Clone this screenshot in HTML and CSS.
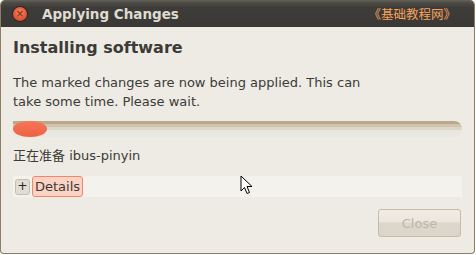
FILE: index.html
```html
<!DOCTYPE html>
<html lang="en">
<head>
    <meta charset="UTF-8">
    <title>Applying Changes</title>
    <link rel="stylesheet" href="styles.css">
</head>
<body>
    <div class="window">
        <div class="titlebar">
            <span class="close-btn"><span class="close-x">&times;</span></span>
            <span class="title">Applying Changes</span>
            <span class="watermark">《基础教程网》</span>
        </div>
        <div class="content">
            <h1>Installing software</h1>
            <p class="message">The marked changes are now being applied. This can<br>take some time. Please wait.</p>
            <div class="progress"><div class="progress-fill"></div></div>
            <div class="status">正在准备 ibus-pinyin</div>
            <div class="details-row">
                <span class="expander">+</span>
                <span class="details-label">Details</span>
            </div>
            <div class="actions">
                <button class="close-button" disabled>Close</button>
            </div>
        </div>
        <!-- mouse pointer -->
        <svg class="pointer" width="14" height="21" viewBox="0 0 14 21">
            <path d="M1 1 L1 16 L4.5 12.5 L7 18.5 L9.5 17.5 L7 11.5 L12 11.5 Z" fill="#fff" stroke="#000" stroke-width="1" stroke-linejoin="miter"/>
        </svg>
    </div>
</body>
</html>
```
FILE: styles.css
```css
body {
    margin: 0;
    font-family: 'DejaVu Sans', 'Noto Sans CJK SC', sans-serif;
    background-color: #ffffff;
}

.window {
    position: relative;
    width: 473px;
    height: 253px;
    background-color: #edebe4;
    border: 1px solid #8d7e63;
    border-top: none;
    border-radius: 5px 5px 4px 4px;
    overflow: hidden;
}

/* title bar */
.titlebar {
    height: 27px;
    display: flex;
    align-items: center;
    background: linear-gradient(#66625a 0, #4b4944 3px, #3d3c38 8px, #3a3935 100%);
    color: #dfdbd2;
}

.close-btn {
    width: 14px;
    height: 14px;
    margin-left: 12px;
    border-radius: 50%;
    background: radial-gradient(circle at 50% 40%, #f6896a 0, #e45a38 55%, #b9391f 100%);
    box-shadow: 0 0 0 1px #2a2926;
    display: flex;
    align-items: center;
    justify-content: center;
}

.close-x {
    color: #8a3a22;
    font-size: 10px;
    font-weight: bold;
    line-height: 1;
}

.title {
    margin-left: 15px;
    font-size: 13.5px;
    font-weight: bold;
}

.watermark {
    margin-left: auto;
    margin-right: 18px;
    font-family: 'Noto Sans CJK SC', sans-serif;
    font-size: 12.5px;
    color: #f7a25a;
}

/* body */
.content {
    padding: 11px 12px 0 12px;
    color: #3c3b37;
}

h1 {
    margin: 0;
    font-size: 16px;
    font-weight: bold;
    line-height: 20px;
}

.message {
    margin: 15px 0 0 0;
    font-size: 13px;
    line-height: 19px;
}

.progress {
    margin-top: 10px;
    height: 16px;
    width: 449px;
    border-radius: 0 8px 8px 0;
    background: linear-gradient(#b9a98c 0, #b9a98c 3px, #d0c4ae 3px, #d0c4ae 6px, #ddd6c8 6px, #ddd6c8 9px, #e7e6df 9px, #e9e8e2 100%);
}

.progress-fill {
    width: 34px;
    height: 16px;
    border-radius: 17px / 8px;
    background: linear-gradient(#f4765a, #f0603f);
}

.status {
    margin-top: 11px;
    font-size: 13px;
    line-height: 16px;
}

.details-row {
    margin-top: 12px;
    width: 449px;
    height: 21px;
    display: flex;
    align-items: center;
    background-color: #f3f2ec;
}

.expander {
    width: 13px;
    height: 14px;
    margin-left: 2px;
    border: 1px solid #c3bdaf;
    border-radius: 3px;
    background-color: #e2ddd2;
    font-size: 12px;
    line-height: 13px;
    text-align: center;
    color: #222;
}

.details-label {
    margin-left: 2px;
    height: 19px;
    padding: 0 2px;
    border: 1px solid #f2866a;
    border-radius: 3px;
    background-color: #fbd2c3;
    font-size: 13px;
    line-height: 19px;
    color: #3c3b37;
}

.actions {
    display: flex;
    justify-content: flex-end;
    margin-top: 12px;
    padding-right: 1px;
}

.close-button {
    width: 83px;
    height: 28px;
    border: 1px solid #c7bca8;
    border-radius: 3px;
    background: linear-gradient(#f0ede6 0, #ebe7df 45%, #ddd6ca 50%, #dcd5c9 100%);
    font-family: 'DejaVu Sans', sans-serif;
    font-size: 13px;
    color: #bdb6a9;
}

.pointer {
    position: absolute;
    left: 239px;
    top: 175px;
}
```
